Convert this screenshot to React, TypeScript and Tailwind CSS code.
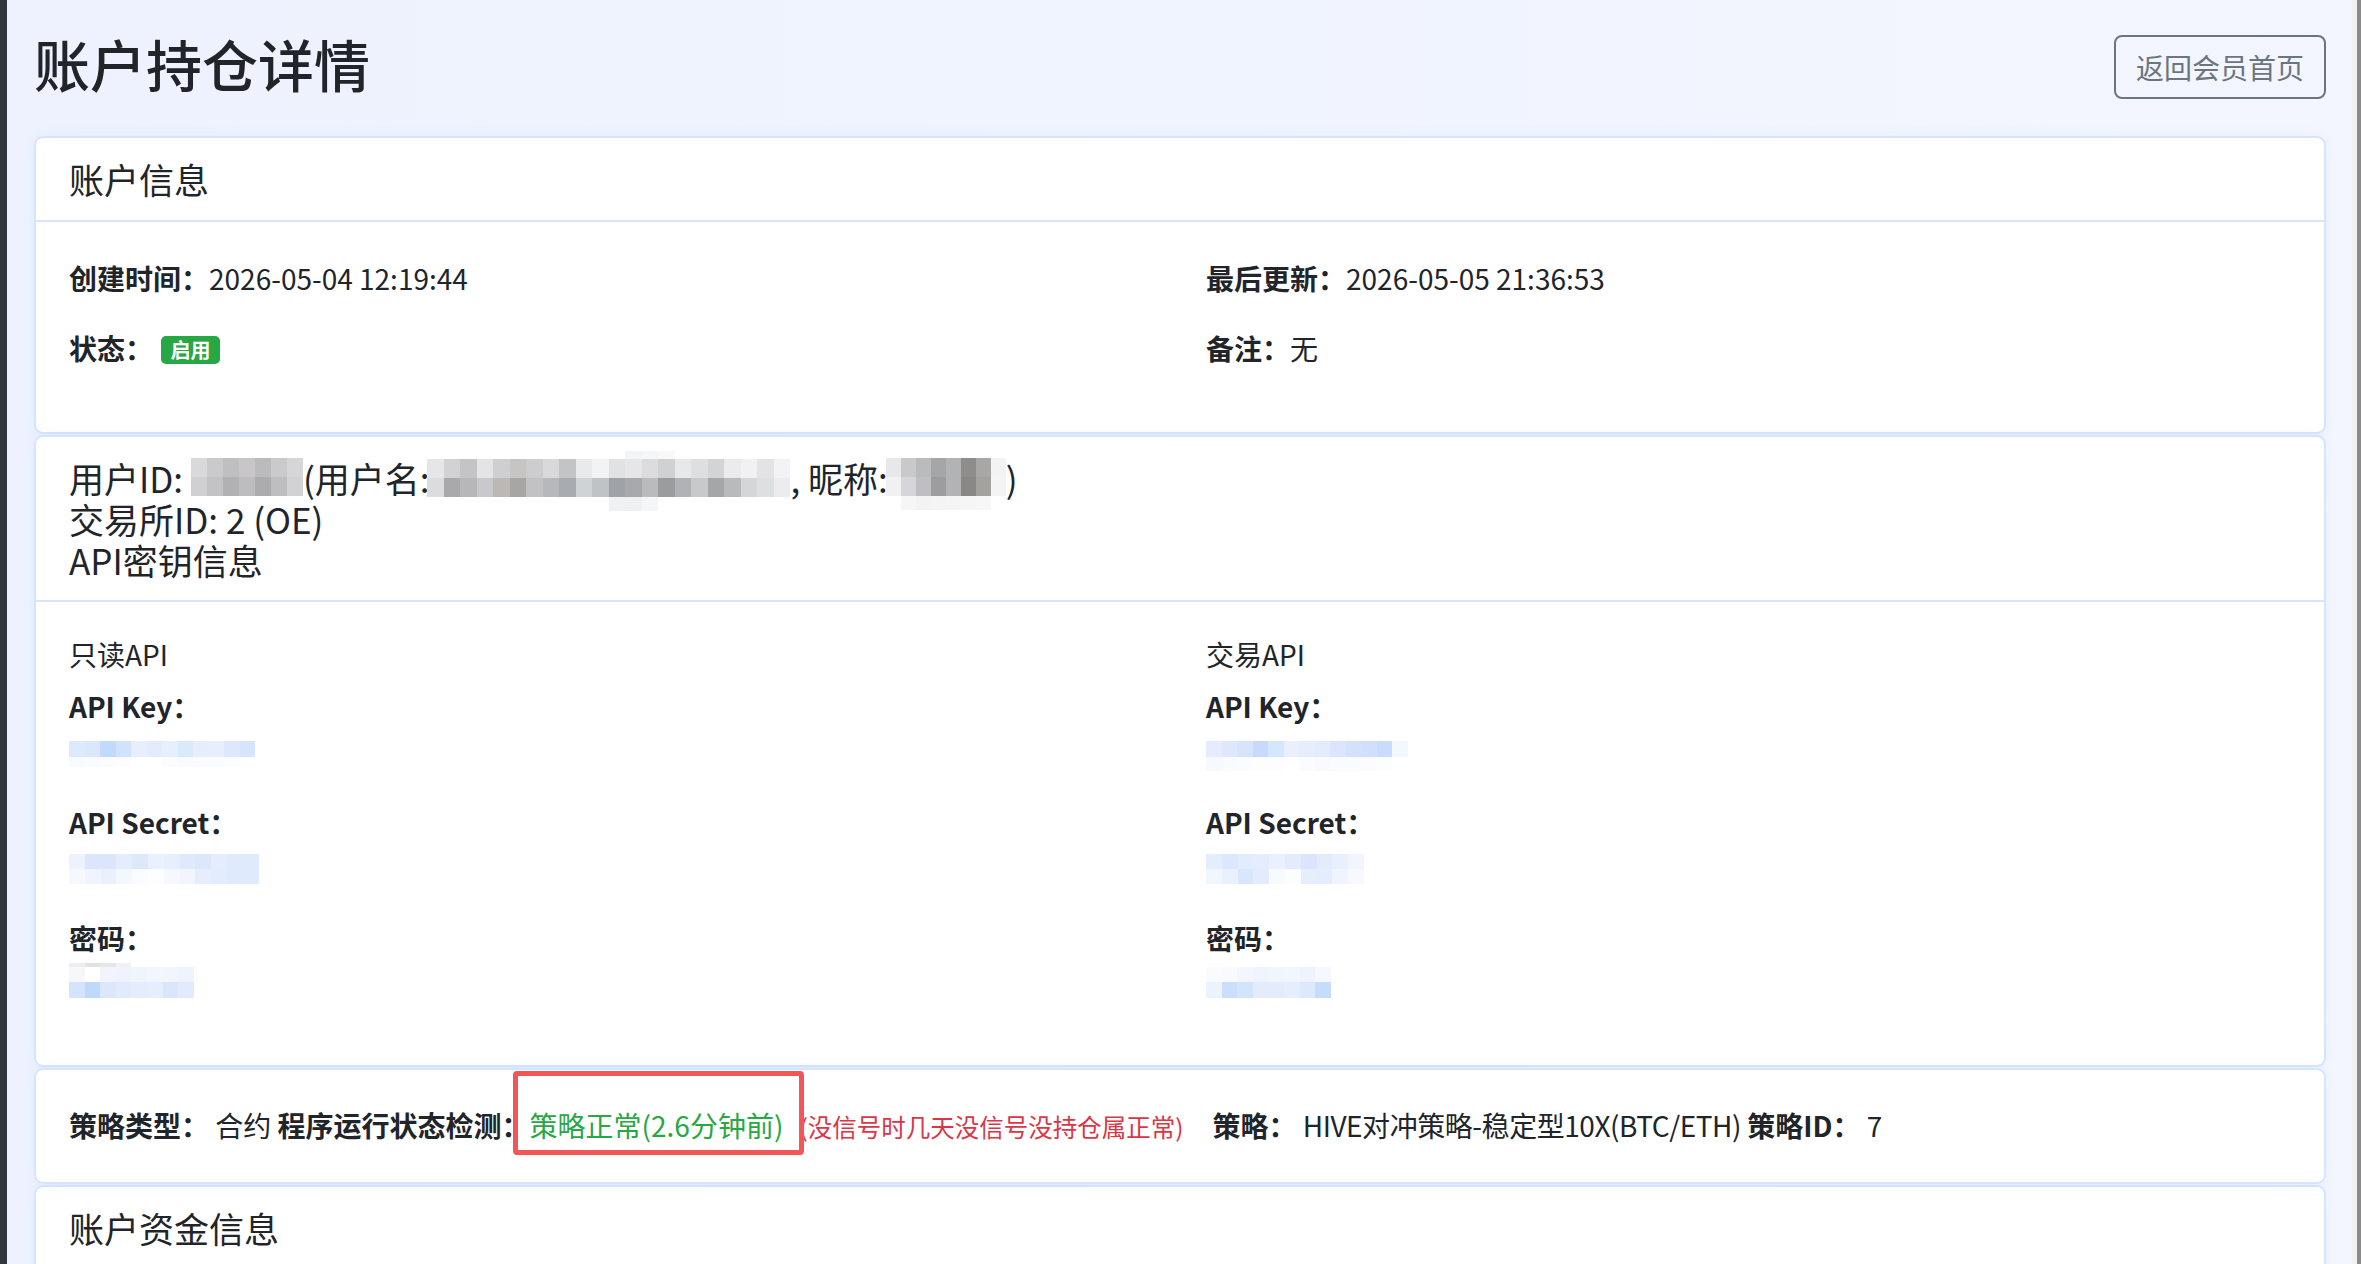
import React from "react";

type Cells = { h: number; colors: string[] }[];

// pixelated (打码) blocks used where the original hides the values
const Mosaic = ({ rows, cw, className = "" }: { rows: Cells; cw: number; className?: string }) => (
  <span className={`inline-flex flex-col shrink-0 ${className}`}>
    {rows.map((r, i) => (
      <span key={i} className="flex">
        {r.colors.map((c, j) => (
          <span key={j} style={{ width: cw, height: r.h, background: c }} />
        ))}
      </span>
    ))}
  </span>
);

const blurId: Cells = [
  { h: 19, colors: ["#d9d9db", "#cacacd", "#bfbfc2", "#c8c6c8", "#bbbbbe", "#cacacd", "#d6d6d9"] },
  { h: 19, colors: ["#d0d0d2", "#c3c3c5", "#b1b1b3", "#bdbcbe", "#acacae", "#bebec1", "#d2d2d5"] },
];
const blurName: Cells = [
  { h: 8, colors: ["#ffffff", "#ffffff", "#ffffff", "#ffffff", "#ffffff", "#ffffff", "#ffffff", "#ffffff", "#ffffff", "#ffffff", "#ffffff", "#ffffff", "#f3f4f6", "#f5f6f7", "#f8f8f9", "#ffffff", "#ffffff", "#ffffff", "#ffffff", "#ffffff", "#ffffff", "#ffffff"] },
  { h: 19, colors: ["#e6e6e8", "#d2d2d4", "#c4c4c6", "#e4e4e6", "#cfcfd2", "#c7c5c4", "#cdcdd0", "#d9d9dc", "#c2c4c6", "#e9eaec", "#f2f3f5", "#e0e2e4", "#e6e6e8", "#dcdcde", "#cfd1d3", "#e7e8ea", "#dedfe1", "#d3d4d6", "#ebebed", "#f1f1f3", "#e3e3e5", "#f3f3f5"] },
  { h: 19, colors: ["#dcdcde", "#a9a9ab", "#b7b7ba", "#c9c9cb", "#bcb8b5", "#a8a6a4", "#c2c2c4", "#b6b8bb", "#a8acb0", "#cfd3d6", "#bfc3c6", "#9fa3a7", "#a7a9ab", "#b9bbbd", "#9a9c9e", "#b0b2b5", "#c8c9cb", "#a5a6a8", "#b9babc", "#d5d6d8", "#dedfe1", "#ececee"] },
  { h: 14, colors: ["#ffffff", "#ffffff", "#ffffff", "#ffffff", "#ffffff", "#ffffff", "#ffffff", "#ffffff", "#ffffff", "#ffffff", "#ffffff", "#f0f1f3", "#eef0f2", "#f5f6f7", "#ffffff", "#ffffff", "#ffffff", "#ffffff", "#ffffff", "#ffffff", "#ffffff", "#ffffff"] },
];
const blurNick: Cells = [
  { h: 19, colors: ["#e8e8ea", "#c9c9cb", "#b9bbbc", "#a4a6a8", "#b1b3b4", "#8f8d8b", "#a9a7a5", "#f3f3f4"] },
  { h: 19, colors: ["#f1f1f2", "#d6d6d8", "#bfbfc1", "#9d9d9f", "#b3b3b5", "#8a8886", "#a4a29f", "#f4f4f5"] },
  { h: 14, colors: ["#ffffff", "#f6f6f7", "#f3f3f4", "#f4f4f5", "#f5f5f6", "#f6f6f7", "#f7f7f8", "#ffffff"] },
];

const keyL: Cells = [
  { h: 16, colors: ["#dde9fd", "#dbe8fc", "#c2dafd", "#d0e2fd", "#e8effc", "#e3ecfc", "#e6effd", "#d8eafb", "#e6eefc", "#e7effd", "#dde8fc", "#d6e5fc"] },
  { h: 10, colors: ["#f8fafe", "#fafbfe", "#fbfcff", "#fdfdff", "#ffffff", "#ffffff", "#fbfcff", "#f8fafe", "#f9fbfe", "#fafbfe", "#fcfdff", "#ffffff"] },
];
const keyR: Cells = [
  { h: 16, colors: ["#e6ecfd", "#dde8fc", "#d8e4fc", "#c8dafc", "#d5e7fc", "#eaeefd", "#e6eefd", "#e3ecfd", "#d9e6fd", "#d3e1fc", "#d0e0fc", "#c9dcfc", "#f3f7fe"] },
  { h: 14, colors: ["#f7f9fe", "#fafbff", "#fbfcff", "#fcfdff", "#fdfdff", "#ffffff", "#fbfcff", "#f8fafe", "#f9fbfe", "#fafbfe", "#fbfcff", "#fcfdff", "#ffffff"] },
];
const secL: Cells = [
  { h: 15, colors: ["#eef2fd", "#dbe6fc", "#dbe6fc", "#e4edfd", "#dde8fc", "#eaf0fe", "#e7effd", "#dfe9fd", "#dce7fc", "#e4ecfd", "#e0eafd", "#dfeafd"] },
  { h: 15, colors: ["#f6f8fe", "#eff4fe", "#eaf1fd", "#f3f7fe", "#fbfcff", "#fdfeff", "#f5f8fe", "#f0f5fe", "#e5eefd", "#e2ecfd", "#dfeafd", "#dfeafd"] },
];
const secR: Cells = [
  { h: 15, colors: ["#e4edfd", "#dce8fd", "#e2ecfd", "#e4edfd", "#eaf0fe", "#e3ecfd", "#dbe6fc", "#e3ecfd", "#e8effd", "#f2f5fe", "#ffffff"] },
  { h: 15, colors: ["#f2f6fe", "#e9f1fd", "#d9e7fd", "#e2ecfd", "#f8fafe", "#fcfdff", "#e5eefd", "#e3edfd", "#eff4fe", "#f7f9fe", "#ffffff"] },
];
const pwdL: Cells = [
  { h: 4, colors: ["#eeeeee", "#e2e2e2", "#e6e6e6", "#f2f2f2", "#ffffff", "#ffffff", "#ffffff", "#ffffff"] },
  { h: 15, colors: ["#f6f7fb", "#ffffff", "#f1f4fb", "#eef3fd", "#f0f4fd", "#f3f6fe", "#f2f5fd", "#eef3fd"] },
  { h: 16, colors: ["#d4e4fd", "#c1d8fd", "#dbe7fd", "#e1ebfd", "#e4edfd", "#e6eefd", "#dae6fd", "#e1ebfd"] },
];
const pwdR: Cells = [
  { h: 4, colors: ["#ffffff", "#ffffff", "#ffffff", "#ffffff", "#ffffff", "#ffffff", "#ffffff", "#ffffff"] },
  { h: 15, colors: ["#fafbfe", "#f8fafe", "#f3f6fe", "#eff4fe", "#f1f5fe", "#f2f6fe", "#eef3fd", "#f5f8fe"] },
  { h: 16, colors: ["#edf3fe", "#cadffd", "#d3e4fd", "#e2ecfd", "#e3ecfd", "#e6eefd", "#dce8fd", "#c6dcfd"] },
];

const ApiColumn = ({ title, k, s, p }: { title: string; k: Cells; s: Cells; p: Cells }) => (
  <div>
    <h6 className="text-[28px] leading-[34px] mb-[14px]">{title}</h6>
    <div className="font-bold leading-[42px]">API Key：</div>
    <div className="h-[44px] flex items-start pt-[14px] mb-[30px]">
      <Mosaic rows={k} cw={15.5} />
    </div>
    <div className="font-bold leading-[42px]">API Secret：</div>
    <div className="h-[44px] flex items-start pt-[11px] mb-[30px]">
      <Mosaic rows={s} cw={15.8} />
    </div>
    <div className="font-bold leading-[42px]">密码：</div>
    <div className="h-[44px] flex items-start pt-[4px]">
      <Mosaic rows={p} cw={15.6} />
    </div>
  </div>
);

export default function App() {
  return (
    <div className="flex h-[1264px] w-full overflow-hidden bg-linear-to-r from-[#edf2fe] to-[#f3f6fe] text-[#212529] font-['Noto_Sans_CJK_SC',sans-serif] text-[28px] leading-[42px]">
      <div className="w-[7px] shrink-0 bg-[#33373f]" />

      <main className="flex-1 pl-[27px] pr-[26px] pt-[29px]">
        {/* 页头 */}
        <div className="flex items-start justify-between mb-[37px]">
          <h2 className="text-[56px] leading-[67px] font-medium">账户持仓详情</h2>
          <button className="mt-[6px] h-[64px] px-[20px] rounded-[8px] border-2 border-[#6c757d] text-[#6c757d] text-[28px]">
            返回会员首页
          </button>
        </div>

        <div className="flex flex-col gap-[1px]">
          {/* 账户信息 */}
          <div className="bg-white border-2 border-[#d5e5ff] rounded-[9px] shadow-[0_0_14px_rgba(13,110,253,0.05)]">
            <div className="px-[33px] py-[20px] border-b-2 border-[#d5e5ff] text-[35px] leading-[42px]">账户信息</div>
            <div className="px-[33px] pt-[35px] pb-[63px] grid grid-cols-2 gap-x-[52px] gap-y-[28px]">
              <div>
                <span className="font-bold">创建时间：</span>2026-05-04 12:19:44
              </div>
              <div>
                <span className="font-bold">最后更新：</span>2026-05-05 21:36:53
              </div>
              <div className="flex items-center h-[42px]">
                <span className="font-bold">状态：</span>
                <span className="ml-[8px] mt-[3px] h-[28px] w-[59px] rounded-[5px] bg-[#28a745] text-white text-[20px] leading-[28px] font-bold text-center">
                  启用
                </span>
              </div>
              <div>
                <span className="font-bold">备注：</span>无
              </div>
            </div>
          </div>

          {/* 用户 & API 密钥 */}
          <div className="bg-white border-2 border-[#d5e5ff] rounded-[9px] shadow-[0_0_14px_rgba(13,110,253,0.05)]">
            <div className="px-[33px] py-[20px] border-b-2 border-[#d5e5ff] text-[35px] leading-[41px]">
              <div className="flex items-center h-[41px] whitespace-nowrap">
                <span>用户ID:&nbsp;</span>
                <Mosaic rows={blurId} cw={16} className="-mt-[2px]" />
                <span>(用户名:</span>
                <Mosaic rows={blurName} cw={16.5} className="-ml-[2px] mt-[6px]" />
                <span>,&nbsp;昵称:</span>
                <Mosaic rows={blurNick} cw={15} className="-ml-[2px] mt-[12px]" />
                <span>)</span>
              </div>
              <div>交易所ID: 2 (OE)</div>
              <div>API密钥信息</div>
            </div>
            <div className="px-[33px] pt-[35px] pb-[62px] grid grid-cols-2 gap-x-[52px]">
              <ApiColumn title="只读API" k={keyL} s={secL} p={pwdL} />
              <ApiColumn title="交易API" k={keyR} s={secR} p={pwdR} />
            </div>
          </div>

          {/* 策略状态 */}
          <div className="relative bg-white border-2 border-[#d5e5ff] rounded-[9px] shadow-[0_0_14px_rgba(13,110,253,0.05)]">
            <div className="px-[33px] py-[34px] whitespace-nowrap">
              <span className="font-bold">策略类型：</span> 合约 <span className="font-bold">程序运行状态检测：</span>
              <span className="text-[#28a745]">策略正常(2.6分钟前)</span>
              <span className="text-[#dc3545] text-[24.5px] ml-[16px] mr-[29px]">(没信号时几天没信号没持仓属正常)</span>
              <span className="font-bold">策略：</span> <span className="tracking-[-0.45px]">HIVE对冲策略-稳定型10X(BTC/ETH)</span> <span className="font-bold">策略ID：</span> 7
            </div>
            {/* 截图标注框 */}
            <div className="absolute left-[477px] top-[1px] w-[291px] h-[84px] border-[5px] border-[#f35656] rounded-[4px] pointer-events-none" />
          </div>

          {/* 账户资金信息 */}
          <div className="bg-white border-2 border-[#d5e5ff] rounded-[9px] shadow-[0_0_14px_rgba(13,110,253,0.05)]">
            <div className="px-[33px] py-[20px] border-b-2 border-[#d5e5ff] text-[35px] leading-[42px]">账户资金信息</div>
            <div className="h-[200px]" />
          </div>
        </div>
      </main>

      <div className="w-[9px] shrink-0 flex">
        <div className="w-[5px] bg-[#f1f1f1]" />
        <div className="w-[4px] bg-[#8a8a8a]" />
      </div>
    </div>
  );
}
